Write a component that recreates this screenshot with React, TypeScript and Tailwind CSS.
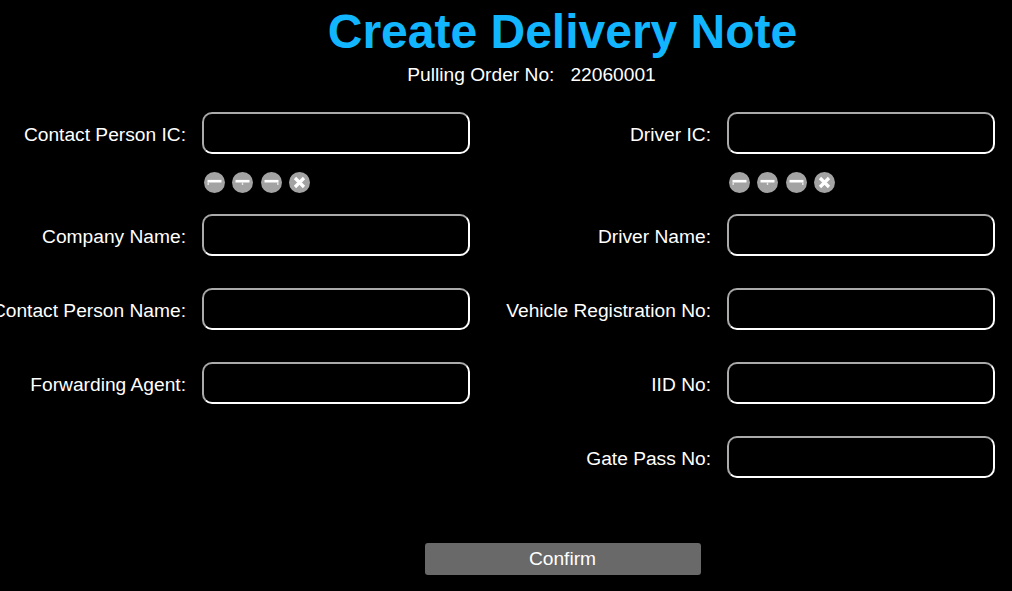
const font = { fontFamily: '"Liberation Sans", Arial, sans-serif' }

function RoundIcon({ kind }: { kind: 'left' | 'mid' | 'right' | 'x' }) {
  return (
    <svg width="21" height="21" viewBox="0 0 21 21" className="shrink-0">
      <circle cx="10.5" cy="10.5" r="10.5" fill="#a3a3a3" />
      {kind === 'x' ? (
        <path d="M6 6 15 15M15 6 6 15" stroke="#fff" strokeWidth="3.2" />
      ) : (
        <path d="M3.5 9.2h14" stroke="#fff" strokeWidth="2.6" />
      )}
      {kind === 'left' && <path d="M4.2 10.5v2.5" stroke="#e8e8e8" strokeWidth="1.4" />}
      {kind === 'mid' && <path d="M10.5 10.5v2.5" stroke="#e8e8e8" strokeWidth="1.4" />}
      {kind === 'right' && <path d="M16.8 10.5v2.5" stroke="#e8e8e8" strokeWidth="1.4" />}
    </svg>
  )
}

function Field({ label }: { label: string }) {
  return (
    <div className="flex items-center h-[42px]">
      <div className="w-[186px] shrink-0 flex justify-end whitespace-nowrap text-[19.2px] leading-[22px] pt-[4px] text-white">{label}</div>
      <input
        type="text"
        className="ml-4 w-[268px] h-[42px] bg-black rounded-[10px] border-2 border-t-[#aaaaaa] border-l-[#aaaaaa] border-r-white border-b-white"
      />
    </div>
  )
}

function ScanIcons() {
  return (
    <div className="ml-[203.5px] flex gap-[7.6px] mt-[18px] mb-[20px] h-[22px]">
      <RoundIcon kind="left" />
      <RoundIcon kind="mid" />
      <RoundIcon kind="right" />
      <RoundIcon kind="x" />
    </div>
  )
}

export default function App() {
  return (
    <div className="w-[1012px] h-[591px] bg-black overflow-hidden flex flex-col" style={font}>
      <h1 className="text-[48px] leading-[55px] font-bold text-[#12b6ff] text-center pl-[113px] mt-[4px]">Create Delivery Note</h1>
      <div className="text-[19.2px] leading-[22px] text-white text-center pl-[51px] mt-[5px] whitespace-pre">Pulling Order No:   22060001</div>

      <div className="flex mt-[26px]">
        <div className="w-[525px] flex flex-col">
          <Field label="Contact Person IC:" />
          <ScanIcons />
          <div className="flex flex-col gap-8">
            <Field label="Company Name:" />
            <Field label="Contact Person Name:" />
            <Field label="Forwarding Agent:" />
          </div>
        </div>
        <div className="w-[487px] flex flex-col">
          <Field label="Driver IC:" />
          <ScanIcons />
          <div className="flex flex-col gap-8">
            <Field label="Driver Name:" />
            <Field label="Vehicle Registration No:" />
            <Field label="IID No:" />
            <Field label="Gate Pass No:" />
          </div>
        </div>
      </div>

      <div className="flex justify-center pl-[114px] mt-[65px]">
        <button className="w-[276px] h-8 bg-[#696969] rounded-[3px] text-white text-[19.2px] leading-[22px] pr-[1px]">Confirm</button>
      </div>
    </div>
  )
}
